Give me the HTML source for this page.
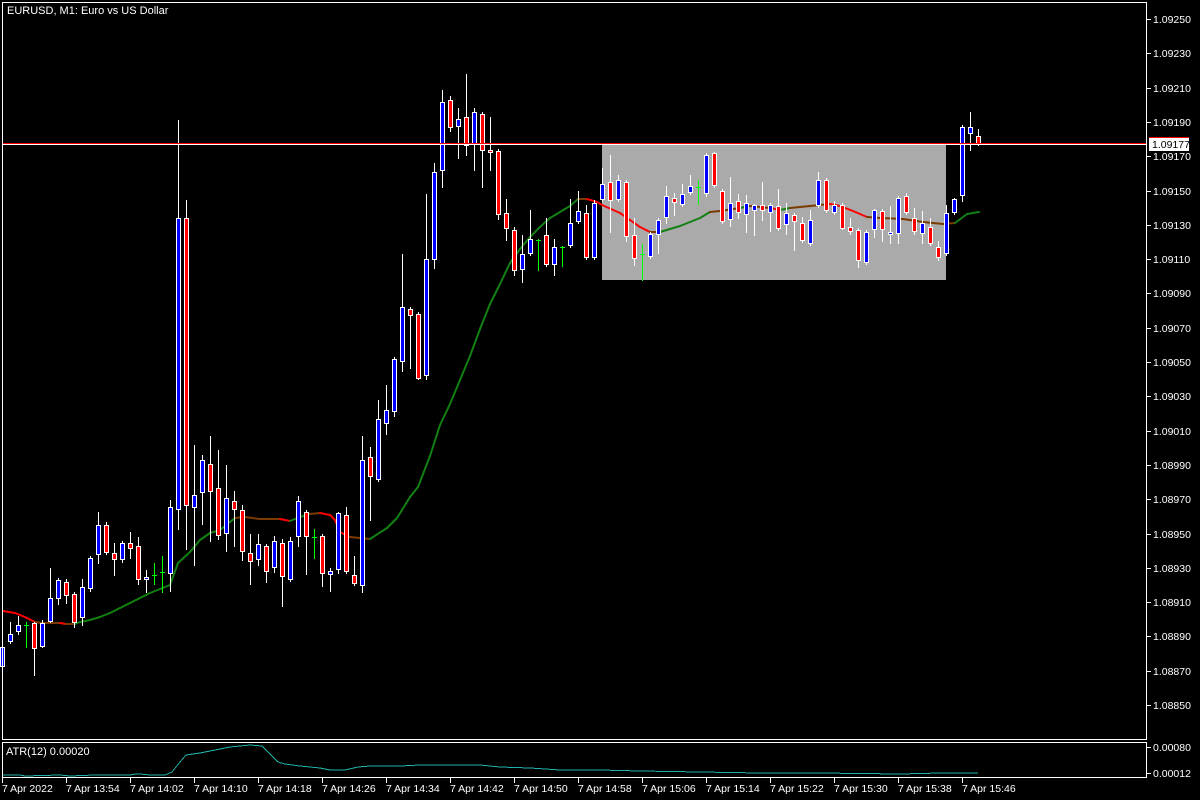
<!DOCTYPE html>
<html><head><meta charset="utf-8"><style>
html,body{margin:0;padding:0;background:#000;width:1200px;height:800px;overflow:hidden}
svg{display:block}
text{font-family:"Liberation Sans","DejaVu Sans",sans-serif;font-size:10.5px;fill:#fff}
</style></head><body>
<svg id="s" width="1200" height="800" xmlns="http://www.w3.org/2000/svg" shape-rendering="crispEdges">
<rect width="1200" height="800" fill="#000"/>
<rect x="602" y="145" width="344" height="135" fill="#aaaaaa"/>
<g id="ma"></g>
<g id="c"></g>
<line x1="2" y1="143.5" x2="1147" y2="143.5" stroke="#ff0000"/>
<line x1="2" y1="144.5" x2="1147" y2="144.5" stroke="#fff"/>
<rect x="2.5" y="2.5" width="1144" height="737" fill="none" stroke="#fff"/>
<rect x="2.5" y="742.5" width="1144" height="35" fill="none" stroke="#fff"/>
<text x="7" y="14" style="font-size:11px">EURUSD, M1:  Euro vs US Dollar</text>
<text x="6" y="755" style="font-size:11px">ATR(12) 0.00020</text>
<g id="ax"></g>
<polyline fill="none" stroke="#20b2aa" points="3,775 20,775 25,776 60,775 70,776 95,775 130,775 135,774 140,774 150,775 165,775 172,772 180,762 186,755 200,753 215,750 230,747 250,745 262,746 268,752 278,762 285,764 300,766 320,768 330,770 345,770 358,767 370,766 400,766 420,765 480,765 500,767 530,768 560,770 600,770 640,771 700,772 760,773 820,773 900,774 940,773 978,773"/>
<rect x="1149" y="138" width="40" height="13" fill="#fff"/>
<line x1="1149" y1="137.5" x2="1189" y2="137.5" stroke="#ff0000"/>
<text x="1152" y="148" style="fill:#000">1.09177</text>
</svg>
<script>
var NS="http://www.w3.org/2000/svg";
function el(p,t,a){var e=document.createElementNS(NS,t);for(var k in a)e.setAttribute(k,a[k]);p.appendChild(e);return e;}
var C=[
['b',647,667,645,668],['b',634,642,622,644],['b',625,632,616,635],['g',625,625,622,648],['r',623,649,622,676],
['b',623,647,620,648],['b',598,622,568,623],['b',580,599,578,605],['r',582,596,579,604],['r',594,623,592,628],
['b',587,618,579,626],['b',558,589,556,592],['b',525,555,512,564],['r',525,553,522,555],['r',553,560,543,576],
['b',543,560,541,563],['r',543,549,532,559],['r',546,580,537,585],['b',577,579,570,593],['g',575,575,563,585],
['g',572,572,556,593],['b',507,574,500,592],['b',218,510,120,530],['r',218,506,200,550],['b',495,508,445,566],
['b',460,493,455,525],['r',464,492,436,542],['r',488,536,450,540],['b',498,534,465,552],['r',501,510,491,547],
['r',510,552,505,561],['r',553,562,534,585],['b',544,560,534,566],['r',546,572,544,583],['b',541,568,536,573],
['r',543,577,539,607],['b',541,580,537,582],['b',501,537,496,547],['r',512,537,510,575],['g',537,537,529,559],
['r',536,574,534,587],['b',571,575,568,592],['b',513,570,512,574],['r',515,572,507,574],['r',575,584,556,586],
['b',460,586,436,593],['r',457,477,447,521],['b',419,480,400,482],['b',410,424,385,435],['b',359,412,357,417],
['b',307,362,254,372],['r',309,316,307,369],['r',314,379,312,380],['b',259,376,194,380],['b',172,260,163,269],
['b',102,171,90,188],['r',100,128,96,132],['b',119,127,108,159],['r',117,146,74,156],['b',112,144,108,171],
['r',114,151,112,188],['r',150,153,117,171],['r',151,215,149,220],['r',213,229,199,241],['r',230,271,227,276],
['b',254,270,235,283],['b',239,254,210,256],['g',240,240,239,271],['r',235,265,218,267],['b',247,265,239,276],
['g',247,247,246,267],['b',223,246,199,248],['b',211,222,191,224],['r',213,258,205,260],['b',203,258,200,260],
['b',184,200,168,202],['r',182,201,155,233],['b',180,200,175,202],['r',182,237,180,242],['r',235,259,218,266],
['g',254,254,244,281],['b',234,257,232,259],['b',220,235,218,254],['b',196,218,186,224],['r',198,203,193,216],
['b',194,205,184,207],['b',186,193,175,195],['g',187,187,180,205],['b',155,194,153,197],['r',153,186,152,188],
['r',191,222,189,224],['b',203,220,177,227],['r',201,213,194,219],['b',203,215,195,233],['b',205,211,204,236],
['r',205,211,182,221],['b',205,213,203,232],['r',206,229,189,231],['b',213,225,203,235],['r',215,222,213,251],
['r',223,241,217,243],['b',220,244,210,246],['b',180,206,172,208],['r',180,211,178,213],['b',205,213,201,215],
['r',205,229,203,230],['r',227,232,218,235],['r',230,261,228,268],['b',232,263,230,265],['b',210,230,209,238],
['r',211,230,209,242],['b',232,234,206,244],['b',198,234,196,244],['r',196,213,193,215],['r',218,232,208,235],
['b',223,234,211,244],['r',227,244,218,246],['r',247,258,241,261],['b',213,254,205,256],['b',199,213,198,215],
['b',127,196,125,202],['b',127,134,112,151],['r',136,144,129,146]
];
var g=document.getElementById('c');
C.forEach(function(c,k){
  var x=Math.round(2+8*k+0.3);
  el(g,'rect',{x:x,y:c[3],width:1,height:c[4]-c[3],fill:c[0]=='g'?'#00ff00':'#fff'});
  if(c[0]=='g'){el(g,'rect',{x:x-2,y:c[1],width:5,height:1,fill:'#00ff00'});return;}
  var h=Math.max(c[2]-c[1],3);
  el(g,'rect',{x:x-2,y:c[1],width:5,height:h,fill:'#fff'});
  el(g,'rect',{x:x-1,y:c[1]+1,width:3,height:h-2,fill:c[0]=='b'?'#0000ff':'#ff0000'});
});
var M=[[3,611],[15,613],[20,615],[27,618],[35,622],[42,623],[60,623],[66,624],[75,624],[80,622],[90,620],[100,617],[110,613],[120,608],[130,603],[140,598],[150,593],[160,589],[170,585],[178,563],[190,552],[200,540],[210,533],[220,530],[235,518],[245,517],[260,519],[280,519],[290,521],[300,517],[310,514],[320,513],[330,515],[335,520],[340,532],[350,537],[370,539],[387,528],[397,518],[410,497],[418,487],[430,456],[440,425],[450,404],[460,380],[470,356],[480,329],[490,304],[500,284],[510,263],[520,249],[530,237],[540,227],[550,218],[560,212],[570,206],[578,199],[587,199],[597,202],[602,205],[620,213],[640,227],[650,232],[660,232],[670,229],[680,226],[690,222],[700,218],[710,212],[720,211],[740,208],[750,206],[770,208],[780,210],[790,208],[810,206],[830,204],[840,206],[853,211],[867,217],[880,218],[903,219],[923,222],[943,224],[955,223],[967,214],[979,212]];
var mg=document.getElementById('ma');
for(var i=0;i<M.length-1;i++){var a=M[i],b=M[i+1];var s=(b[1]-a[1])/(b[0]-a[0]);
 var col=s<-0.15?'#128012':(s>0.15?'#ff0000':'#7a3a00');
 el(mg,'line',{x1:a[0],y1:a[1],x2:b[0],y2:b[1],stroke:col,'stroke-width':2,'stroke-linecap':'round','shape-rendering':'auto'});}
var ax=document.getElementById('ax');
for(var i=0;i<21;i++){var y=Math.round(19+i*34.3);var v=(1.0925-i*0.0002).toFixed(5);
 el(ax,'rect',{x:1147,y:y,width:4,height:1,fill:'#fff'});
 var t=el(ax,'text',{x:1153,y:y+4});t.textContent=v;}
[[747,'0.00080'],[773,'0.00012']].forEach(function(p){el(ax,'rect',{x:1147,y:p[0],width:4,height:1,fill:'#fff'});var t=el(ax,'text',{x:1153,y:p[0]+4});t.textContent=p[1];});
var L=['7 Apr 2022','7 Apr 13:54','7 Apr 14:02','7 Apr 14:10','7 Apr 14:18','7 Apr 14:26','7 Apr 14:34','7 Apr 14:42','7 Apr 14:50','7 Apr 14:58','7 Apr 15:06','7 Apr 15:14','7 Apr 15:22','7 Apr 15:30','7 Apr 15:38','7 Apr 15:46'];
L.forEach(function(s,i){var x=2+64*i;el(ax,'rect',{x:x,y:778,width:1,height:5,fill:'#fff'});var t=el(ax,'text',{x:x+0,y:792});t.textContent=s;});
</script>
</body></html>
